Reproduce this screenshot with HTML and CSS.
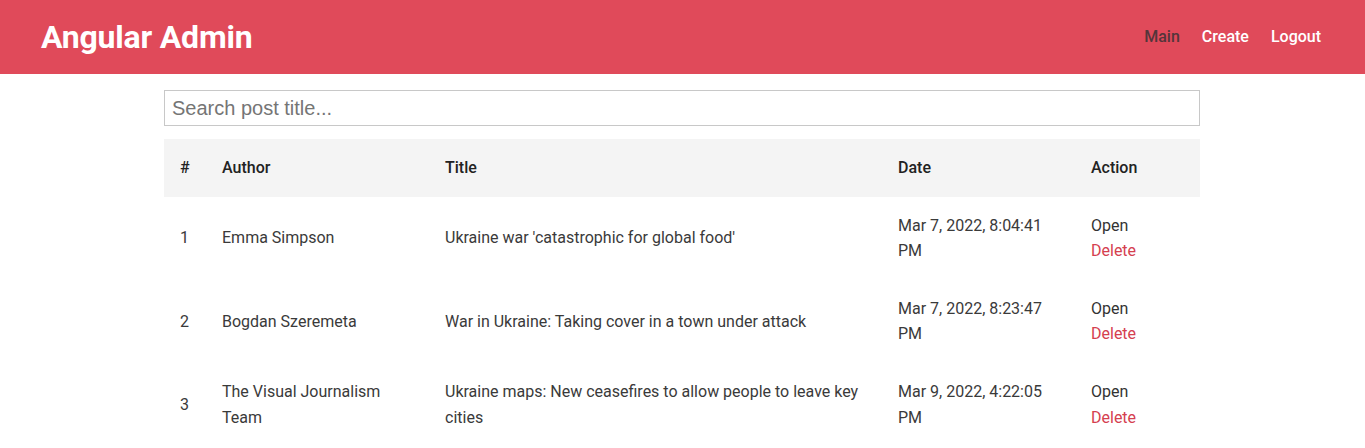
FILE: index.html
```html
<!DOCTYPE html>
<html>
<head>
<meta charset="utf-8">
<link rel="stylesheet" href="styles.css">
</head>
<body>
<header class="navbar">
  <h1 class="brand">Angular Admin</h1>
  <nav class="nav">
    <a class="nav-link active">Main</a>
    <a class="nav-link">Create</a>
    <a class="nav-link">Logout</a>
  </nav>
</header>
<main class="container">
  <input class="search" type="text" placeholder="Search post title...">
  <table class="posts">
    <colgroup>
      <col class="c-num"><col class="c-author"><col class="c-title"><col class="c-date"><col class="c-action">
    </colgroup>
    <thead>
      <tr><th>#</th><th>Author</th><th>Title</th><th>Date</th><th>Action</th></tr>
    </thead>
    <tbody>
      <tr>
        <td>1</td><td>Emma Simpson</td><td>Ukraine war 'catastrophic for global food'</td>
        <td>Mar 7, 2022, 8:04:41 PM</td>
        <td><a class="open">Open</a><br><a class="delete">Delete</a></td>
      </tr>
      <tr>
        <td>2</td><td>Bogdan Szeremeta</td><td>War in Ukraine: Taking cover in a town under attack</td>
        <td>Mar 7, 2022, 8:23:47 PM</td>
        <td><a class="open">Open</a><br><a class="delete">Delete</a></td>
      </tr>
      <tr>
        <td>3</td><td>The Visual Journalism Team</td><td>Ukraine maps: New ceasefires to allow people to leave key cities</td>
        <td>Mar 9, 2022, 4:22:05 PM</td>
        <td><a class="open">Open</a><br><a class="delete">Delete</a></td>
      </tr>
    </tbody>
  </table>
</main>
</body>
</html>
```
FILE: styles.css
```css
* { box-sizing: border-box; }
body {
  margin: 0;
  font-family: Roboto, "Liberation Sans", sans-serif;
  color: #333;
  background: #fff;
}
.navbar {
  height: 74px;
  background: #e04a5a;
  display: flex;
  align-items: center;
  justify-content: space-between;
  padding: 0 44px 0 41px;
}
.brand {
  margin: 0 0 1px;
  color: #fff;
  font-size: 32px;
  font-weight: 700;
  letter-spacing: -0.2px;
}
.nav {
  display: flex;
  gap: 22px;
  margin-bottom: 2px;
}
.nav-link {
  color: #fff;
  font-size: 16px;
  font-weight: 500;
  cursor: pointer;
}
.nav-link.active { color: #53353a; }
.container {
  width: 1037px;
  margin: 16px auto 0;
}
.search {
  display: block;
  width: 1036px;
  height: 36px;
  border: 1px solid #c8c8c8;
  padding: 0 7px;
  font-family: "Liberation Sans", Arial, sans-serif;
  font-size: 20px;
  color: #333;
  margin-bottom: 13px;
  outline: none;
}
.search::placeholder { color: #757575; }
.posts {
  width: 1036px;
  border-collapse: collapse;
  table-layout: fixed;
  font-size: 16px;
  line-height: 1.6;
}
.c-num { width: 42px; }
.c-author { width: 223px; }
.c-title { width: 453px; }
.c-date { width: 193px; }
.c-action { width: 125px; }
.posts th, .posts td {
  padding: 16px;
  text-align: left;
  vertical-align: middle;
}
.posts th {
  background: #f4f4f4;
  font-weight: 500;
  color: #222;
}
.posts td { color: #3a3a3a; }
.open { color: #333; cursor: pointer; }
.delete { color: #d5404f; cursor: pointer; }
```
